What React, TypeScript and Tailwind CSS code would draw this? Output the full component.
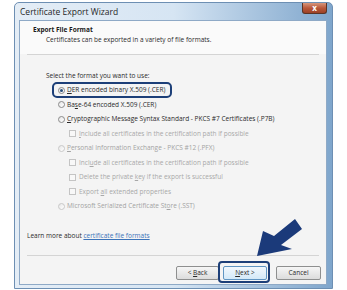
import React from 'react'

function Radio({ checked = false, disabled = false }: { checked?: boolean; disabled?: boolean }) {
  return (
    <span
      className={`flex h-[7px] w-[7px] shrink-0 items-center justify-center rounded-full border bg-gradient-to-br from-[#e6e6e6] to-white ${
        disabled ? 'border-[#c8c8c8]' : 'border-[#8a8a8a]'
      }`}
    >
      {checked && <span className="h-[3px] w-[3px] rounded-full bg-[#2b4f7a]" />}
    </span>
  )
}

function Check() {
  return <span className="h-[7px] w-[7px] shrink-0 border border-[#c4c4c4] bg-[#f8f8f8]" />
}

function RadioRow({ label, checked, disabled }: { label: React.ReactNode; checked?: boolean; disabled?: boolean }) {
  return (
    <div className={`flex h-[14.5px] items-center gap-[2px] pl-[12px] ${disabled ? 'text-[#a3a3a3]' : 'text-[#2a2a2a]'}`}>
      <Radio checked={checked} disabled={disabled} />
      <span className="whitespace-nowrap">{label}</span>
    </div>
  )
}

function CheckRow({ label }: { label: React.ReactNode }) {
  return (
    <div className="flex h-[14.5px] items-center gap-[3px] pl-[23px] text-[#a8a8a8]">
      <Check />
      <span className="whitespace-nowrap">{label}</span>
    </div>
  )
}

export default function App() {
  return (
    <div className="relative h-[290px] w-[347px] overflow-hidden bg-white font-['Open_Sans',sans-serif] text-[6.5px] leading-[10px]">
      {/* window frame */}
      <div className="ml-[14px] mt-[2px] flex h-[287px] w-[319px] flex-col rounded-t-[5px] border border-[#6d8fb3] bg-gradient-to-r from-[#e4edf6] via-[#d6e5f3] to-[#7fa6cc]">
        {/* title bar */}
        <div className="flex h-[17px] shrink-0 items-start justify-between pl-[5px] pr-[5px]">
          <span className="mt-[3px] text-[8.5px] leading-[11px] text-[#262626]">Certificate Export Wizard</span>
          <span className="flex h-[11px] w-[25px] items-center justify-center rounded-b-[3px] border border-t-0 border-[#5b3426] bg-gradient-to-b from-[#d6967c] via-[#b9583a] to-[#9c4126] text-[8px] font-bold leading-none text-white">
            x
          </span>
        </div>

        {/* client area */}
        <div className="mb-[3px] ml-[4px] mr-[5px] flex flex-1 flex-col border border-[#8ea9c6] bg-[#f4f4f4]">
          {/* header */}
          <div className="h-[33px] shrink-0 bg-[#fafafa] pl-[13px] pt-[4px]">
            <div className="font-bold text-[#1a1a1a]">Export File Format</div>
            <div className="pl-[13px] text-[#2a2a2a]">Certificates can be exported in a variety of file formats.</div>
          </div>
          <div className="mx-[7px] border-t border-[#d4d4d4]" />

          {/* body */}
          <div className="pl-[26px] pt-[16px]">
            <div className="mb-[2px] text-[#2a2a2a]">Select the format you want to use:</div>
            <div className="relative">
              <RadioRow checked label={<span><span className="underline">D</span>ER encoded binary X.509 (.CER)</span>} />
              <span className="pointer-events-none absolute left-[6px] top-[-1px] h-[16px] w-[120px] rounded-[5px] border-2 border-[#1d3f78]" />
            </div>
            <RadioRow label={<span>Ba<span className="underline">s</span>e-64 encoded X.509 (.CER)</span>} />
            <RadioRow label={<span><span className="underline">C</span>ryptographic Message Syntax Standard - PKCS #7 Certificates (.P7B)</span>} />
            <CheckRow label={<span><span className="underline">I</span>nclude all certificates in the certification path if possible</span>} />
            <RadioRow disabled label={<span><span className="underline">P</span>ersonal Information Exchange - PKCS #12 (.PFX)</span>} />
            <CheckRow label={<span>Incl<span className="underline">u</span>de all certificates in the certification path if possible</span>} />
            <CheckRow label={<span>Delete the private <span className="underline">k</span>ey if the export is successful</span>} />
            <CheckRow label={<span>Export <span className="underline">a</span>ll extended properties</span>} />
            <RadioRow disabled label={<span>Microsoft Serialized Certificate St<span className="underline">o</span>re (.SST)</span>} />
          </div>

          <div className="mt-[17px] pl-[7px] text-[#2a2a2a]">
            Learn more about <span className="text-[#3b73b9] underline">certificate file formats</span>
          </div>

          <div className="mx-[7px] mt-[14px] border-t border-[#d4d4d4]" />

          {/* buttons */}
          <div className="mt-[10px] flex items-center pl-[156px]">
            <button className="h-[14px] w-[43px] rounded-[2px] border border-[#8e8f8f] bg-gradient-to-b from-[#f6f6f6] to-[#dcdcdc] text-[6.5px] text-[#2a2a2a]">
              &lt; <span className="underline">B</span>ack
            </button>
            <div className="relative ml-[4px]">
              <button className="h-[14px] w-[44px] rounded-[2px] border border-[#5f95c2] bg-gradient-to-b from-[#f2f8fd] to-[#d3e9f8] text-[6.5px] text-[#2a2a2a]">
                <span className="underline">N</span>ext &gt;
              </button>
              <span className="pointer-events-none absolute left-[-5px] top-[-5px] h-[22px] w-[52px] rounded-[4px] border-2 border-[#1d3f78]" />
            </div>
            <button className="ml-[9px] h-[14px] w-[45px] rounded-[2px] border border-[#8e8f8f] bg-gradient-to-b from-[#f6f6f6] to-[#dcdcdc] text-[6.5px] text-[#2a2a2a]">
              Cancel
            </button>
          </div>
        </div>
      </div>

      {/* annotation arrow */}
      <svg className="pointer-events-none absolute left-0 top-0" width="347" height="290" viewBox="0 0 347 290">
        <polygon
          points="257,256 263,231 274,236 295,219 302,229 281,245 292,249"
          fill="#1b3a7a"
        />
      </svg>
    </div>
  )
}
